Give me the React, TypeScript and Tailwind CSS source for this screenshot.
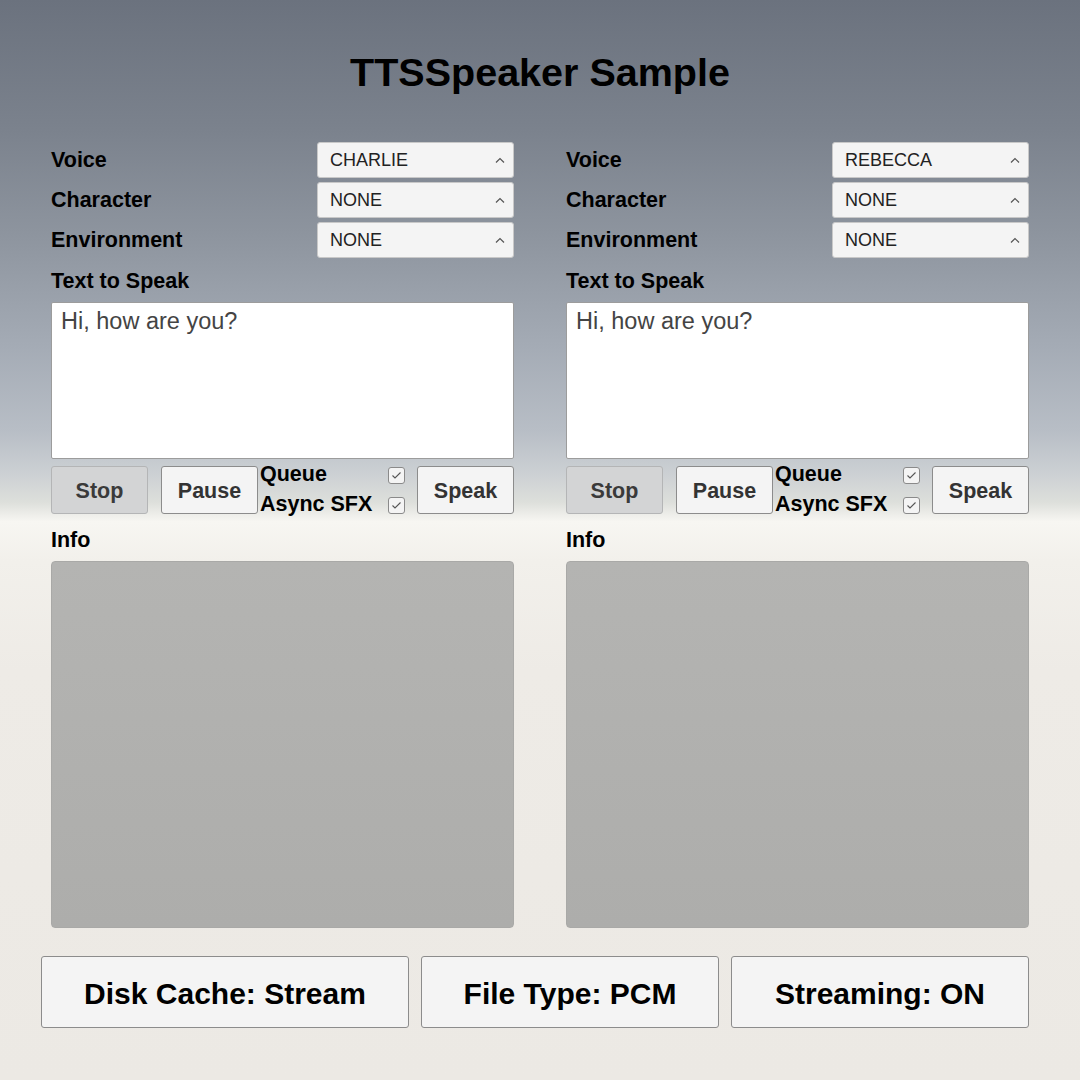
import React from "react";

const font = { fontFamily: '"Liberation Sans", Arial, sans-serif' };

function Caret() {
  return (
    <svg width="10" height="6" viewBox="0 0 10 6" className="shrink-0">
      <polyline points="1,5.5 5,1.5 9,5.5" fill="none" stroke="#555" strokeWidth="1.2" />
    </svg>
  );
}

function Dropdown({ value }: { value: string }) {
  return (
    <div className="w-[197px] h-[36px] bg-[#f4f4f4] rounded-[3px] border border-[#c8c8c8] flex items-center justify-between pl-[12px] pr-[8px] text-[18px] text-[#222]">
      <span>{value}</span>
      <Caret />
    </div>
  );
}

function Row({ label, value }: { label: string; value: string }) {
  return (
    <div className="flex items-center justify-between h-[36px] mb-[4px]">
      <span className="font-bold text-[21.5px] text-black">{label}</span>
      <Dropdown value={value} />
    </div>
  );
}

function Check() {
  return (
    <div className="w-[17px] h-[17px] rounded-[3px] border border-[#8a8a8a] bg-[#f4f4f4] flex items-center justify-center">
      <svg width="11" height="9" viewBox="0 0 11 9">
        <polyline points="1.5,4.5 4,7 9.5,1.5" fill="none" stroke="#555" strokeWidth="1.1" />
      </svg>
    </div>
  );
}

function Panel({ voice }: { voice: string }) {
  return (
    <div className="w-[463px] flex flex-col">
      <Row label="Voice" value={voice} />
      <Row label="Character" value="NONE" />
      <Row label="Environment" value="NONE" />
      <div className="h-[40px] flex items-center pb-[2px]">
        <span className="font-bold text-[21.5px] text-black">Text to Speak</span>
      </div>
      <div className="h-[157px] bg-white border border-[#9c9c9c] rounded-[2px] pl-[9px] pt-[4px] text-[23.5px] text-[#444] leading-[28px]">
        Hi, how are you?
      </div>
      <div className="mt-[7px] h-[48px] flex">
        <div className="w-[97px] h-[48px] rounded-[3px] bg-[#d3d4d5] border border-[#b4b5b6] flex items-center justify-center pt-[2px] font-bold text-[21.5px] text-[#3a3a3a]">
          Stop
        </div>
        <div className="ml-[13px] w-[97px] h-[48px] rounded-[3px] bg-[#f4f4f4] border border-[#8c8c8c] flex items-center justify-center pt-[2px] font-bold text-[21.5px] text-[#333]">
          Pause
        </div>
        <div className="flex-1 flex flex-col pl-[2px]">
          <div className="shrink-0 h-[30px] flex items-center justify-between pr-[12px] -mt-[6px]">
            <span className="font-bold text-[21.5px] text-black leading-none">Queue</span>
            <Check />
          </div>
          <div className="shrink-0 h-[30px] flex items-center justify-between pr-[12px]">
            <span className="font-bold text-[21.5px] text-black leading-none">Async SFX</span>
            <Check />
          </div>
        </div>
        <div className="w-[97px] h-[48px] rounded-[3px] bg-[#f4f4f4] border border-[#8c8c8c] flex items-center justify-center pt-[2px] font-bold text-[21.5px] text-[#333]">
          Speak
        </div>
      </div>
      <div className="h-[47px] flex items-center pt-[5px]">
        <span className="font-bold text-[21.5px] text-black">Info</span>
      </div>
      <div className="h-[367px] rounded-[4px] bg-[linear-gradient(to_bottom,#b4b4b2,#adadab)] border border-[#a9a9a7]" />
    </div>
  );
}

function BigButton({ label, w }: { label: string; w: string }) {
  return (
    <div className={`${w} h-[72px] rounded-[3px] bg-[#f4f4f4] border border-[#8c8c8c] flex items-center justify-center pt-[2px] font-bold text-[30px] text-black`}>
      {label}
    </div>
  );
}

export default function App() {
  return (
    <div
      style={font}
      className="w-[1080px] h-[1080px] overflow-hidden bg-[linear-gradient(to_bottom,#6b727e_0%,#7b828d_12%,#8e959f_22%,#a4abb5_32%,#b8bec6_40%,#cdd1d4_44%,#dddfdb_46.5%,#f7f6f2_48.3%,#f2f0eb_52%,#eeebe6_62%,#ece9e4_100%)]"
    >
      <div className="h-[142px] flex items-center justify-center pt-[4px]">
        <h1 className="font-bold text-[39.5px] text-black">TTSSpeaker Sample</h1>
      </div>
      <div className="flex pl-[51px] gap-[52px]">
        <Panel voice="CHARLIE" />
        <Panel voice="REBECCA" />
      </div>
      <div className="mt-[28px] flex pl-[41px]">
        <BigButton label="Disk Cache: Stream" w="w-[368px]" />
        <div className="w-[12px]" />
        <BigButton label="File Type: PCM" w="w-[298px]" />
        <div className="w-[12px]" />
        <BigButton label="Streaming: ON" w="w-[298px]" />
      </div>
    </div>
  );
}
